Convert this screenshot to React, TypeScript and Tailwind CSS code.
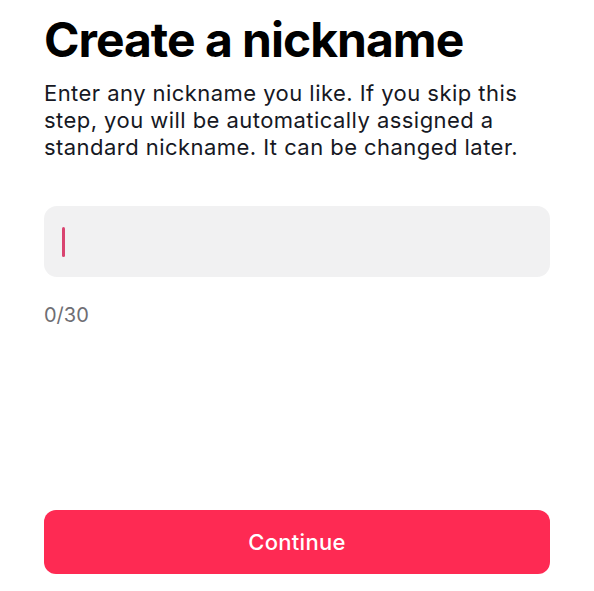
import React from "react";

export default function App() {
  return (
    <div className="w-[594px] h-[591px] bg-white flex flex-col px-[44px] pt-[12px]" style={{ fontFamily: "Inter, 'Noto Sans', sans-serif" }}>
      <h1 className="text-[48px] leading-[56px] font-bold tracking-[-1px] text-black">Create a nickname</h1>
      <p className="mt-[12px] text-[22px] leading-[27px] tracking-[0.45px] text-[#161823]">
        Enter any nickname you like. If you skip this step, you will be automatically assigned a standard nickname. It can be changed later.
      </p>
      <div className="mt-[45px] h-[71px] rounded-[13px] bg-[#f1f1f2] flex items-center pl-[18px]">
        <div className="w-[3px] h-[30px] rounded-full bg-[#d94470]" />
      </div>
      <div className="mt-[26px] text-[20px] leading-[24px] text-[#6e6e73]">0/30</div>
      <div className="flex-1" />
      <button className="mb-[17px] h-[64px] w-full rounded-[12px] bg-[#fe2a53] text-white text-[22px] leading-[28px] tracking-[0.3px] font-medium">
        Continue
      </button>
    </div>
  );
}
